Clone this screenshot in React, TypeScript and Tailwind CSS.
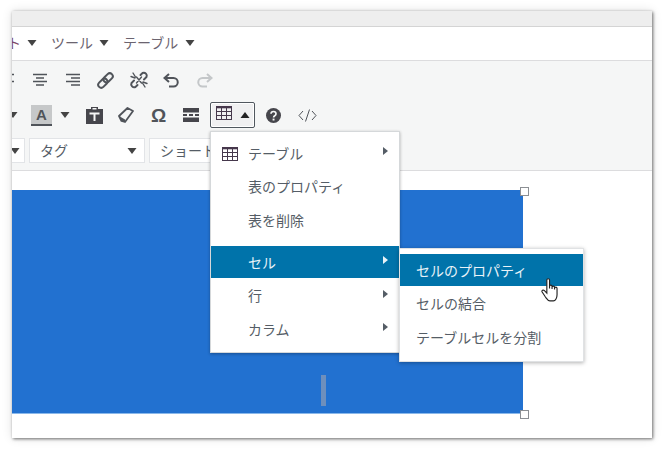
import React from "react";

const font = { fontFamily: '"Noto Sans CJK JP", "Noto Sans", sans-serif' };

function Caret({ up = false, color = "#444" }: { up?: boolean; color?: string }) {
  return (
    <svg width="10" height="6" viewBox="0 0 10 6" className="shrink-0">
      <path d={up ? "M5 0 L9.5 6 L0.5 6 Z" : "M0.5 0 L9.5 0 L5 6 Z"} fill={color} />
    </svg>
  );
}

function TableIcon({ size = 16 }: { size?: number }) {
  return (
    <svg width={size} height={size - 2} viewBox="0 0 16 14" fill="none" stroke="#46384c" strokeWidth="1">
      <rect x="0.5" y="0.5" width="15" height="13" />
      <path d="M0.5 1.5H15.5" strokeWidth="1.6" />
      <path d="M0.5 5.5H15.5M0.5 9.5H15.5M5.5 0.5V13.5M10.5 0.5V13.5" />
    </svg>
  );
}

function Align({ kind }: { kind: "left" | "center" | "right" }) {
  const d =
    kind === "center"
      ? "M1 2.5H15M4 6H12M1 9.5H15M4 13H12"
      : kind === "right"
        ? "M1 2.5H15M6 6H15M1 9.5H15M6 13H15"
        : "M1 2.5H15M1 6H10M1 9.5H15M1 13H10";
  return (
    <svg width="16" height="16" viewBox="0 0 16 16" fill="none" stroke="#50545a" strokeWidth="1.7">
      <path d={d} />
    </svg>
  );
}

function Tool({ children, w = 33 }: { children?: React.ReactNode; w?: number }) {
  return (
    <div className="h-[26px] flex items-center justify-center shrink-0" style={{ width: w }}>
      {children}
    </div>
  );
}

function MenuRow({
  label,
  icon,
  arrow,
  active,
  pad = 37,
}: {
  label: string;
  icon?: React.ReactNode;
  arrow?: boolean;
  active?: boolean;
  pad?: number;
}) {
  return (
    <div
      className={`h-[32px] mb-[1.5px] flex items-center relative text-[14px] ${active ? "bg-[#0073aa] text-[#e8f2f8]" : "text-[#555d66]"}`}
      style={{ paddingLeft: pad }}
    >
      {icon && <span className="absolute left-[11px] top-[10px] flex">{icon}</span>}
      <span className="whitespace-nowrap">{label}</span>
      {arrow && (
        <svg width="5" height="8" viewBox="0 0 5 8" className="absolute right-[11px] top-[10px]">
          <path d="M0 0 L5 4 L0 8 Z" fill={active ? "#e8f2f8" : "#555d66"} />
        </svg>
      )}
    </div>
  );
}

export default function App() {
  return (
    <div className="w-[664px] h-[451px] bg-white overflow-hidden pl-[12px] pt-[11px]" style={font}>
      <div className="relative w-[640px] h-[427px] bg-white flex flex-col shadow-[1px_1px_3px_rgba(0,0,0,0.55),0_0_10px_rgba(0,0,0,0.12)]">
        <div className="h-[16px] bg-[#eeeeee] border-b border-[#d4d4d4] shrink-0" />

        <div className="h-[33px] pb-[2px] flex items-center text-[14px] text-[#6b6470] shrink-0 overflow-hidden whitespace-nowrap">
          <span className="flex items-center gap-[6px] -ml-[5px]">
            <span className="text-[#7c4a68]">ト</span>
            <Caret />
          </span>
          <span className="flex items-center gap-[6px] ml-[14px]">
            ツール
            <Caret />
          </span>
          <span className="flex items-center gap-[7px] ml-[14px]">
            テーブル
            <Caret />
          </span>
        </div>

        <div className="h-[111px] bg-[#f5f6f6] border-y border-[#dcdcde] shrink-0 overflow-hidden">
          <div className="flex items-center -ml-[22px] mt-[6px]">
            <Tool><Align kind="left" /></Tool>
            <Tool><Align kind="center" /></Tool>
            <Tool><Align kind="right" /></Tool>
            <Tool>
              <svg width="19" height="19" viewBox="0 0 19 19" fill="none" stroke="#50545a" strokeWidth="2">
                <g transform="rotate(-45 9.5 9.5)">
                  <rect x="0.5" y="6.5" width="10.5" height="6" rx="3" />
                  <rect x="8" y="6.5" width="10.5" height="6" rx="3" />
                </g>
              </svg>
            </Tool>
            <Tool>
              <svg width="20" height="20" viewBox="0 0 20 20" fill="none" stroke="#50545a" strokeWidth="2" strokeLinecap="round">
                <path d="M11.5 5 L13.5 3 a3 3 0 0 1 4 4 L15 9.5" />
                <path d="M8.5 15 L6.5 17 a3 3 0 0 1 -4 -4 L5 10.5" />
                <path d="M4 3 L6.5 7 M2 6.5 L6 8 M16 17 L13.5 13 M18 13.5 L14 12 M7.5 7 L12.5 13 M7.5 13 L12.5 7" strokeWidth="1.4" />
              </svg>
            </Tool>
            <Tool>
              <svg width="17" height="15" viewBox="0 0 17 15" fill="none" stroke="#50545a" strokeWidth="2">
                <path d="M3 5 H10.5 a4 4 0 0 1 0 8.5 H6" />
                <path d="M6 1 L1.5 5 L6 9" fill="none" />
              </svg>
            </Tool>
            <Tool>
              <svg width="17" height="15" viewBox="0 0 17 15" fill="none" stroke="#c4c7c9" strokeWidth="2">
                <path d="M14 5 H6.5 a4 4 0 0 0 0 8.5 H11" />
                <path d="M11 1 L15.5 5 L11 9" />
              </svg>
            </Tool>
          </div>

          <div className="flex items-center -ml-[12px] mt-[9px]">
            <Tool w={25}><Caret /></Tool>
            <div className="ml-[6px] w-[21px] h-[21px] bg-[#c6c8c9] border-b-2 border-[#50545a] flex items-center justify-center text-[15px] font-semibold text-[#50545a] leading-none" style={{ fontFamily: '"Liberation Sans", sans-serif' }}>
              A
            </div>
            <div className="ml-[8px] w-[10px] flex"><Caret /></div>
            <Tool w={47}>
              <svg width="17" height="18" viewBox="0 0 17 18" className="ml-[2px]">
                <path d="M0 3 H5 V1 H12 V3 H17 V18 H0 Z" fill="#46464c" />
                <rect x="6.5" y="2" width="4" height="1.5" fill="#f5f6f6" />
                <path d="M3.5 6.5 H13.5 V8.5 H9.5 V15 H7.5 V8.5 H3.5 Z" fill="#f5f6f6" />
              </svg>
            </Tool>
            <Tool w={18}>
              <svg width="16" height="16" viewBox="0 0 16 16" strokeLinejoin="round">
                <path d="M1 9 L9.5 1 L15 4 L7 15 L3.5 14 Z" fill="#f5f6f6" stroke="#50545a" strokeWidth="1.8" />
                <path d="M1.5 9.2 L7 12.5 L7 15 L3.5 14 Z" fill="#50545a" />
              </svg>
            </Tool>
            <Tool w={47}>
              <span className="text-[19px] leading-none font-semibold text-[#50545a]" style={{ fontFamily: '"Liberation Sans", sans-serif' }}>Ω</span>
            </Tool>
            <Tool w={18}>
              <svg width="16" height="14" viewBox="0 0 16 14" fill="#46464c">
                <rect x="0" y="0" width="16" height="4.5" />
                <rect x="0" y="6" width="4" height="2" />
                <rect x="6" y="6" width="4" height="2" />
                <rect x="12" y="6" width="4" height="2" />
                <rect x="0" y="9.5" width="16" height="4.5" />
              </svg>
            </Tool>
            <div className="ml-[10px] w-[45px] h-[26px] border border-[#50575e] rounded-[2px] bg-[#f0f0f1] flex items-center pl-[5px] gap-[8px] shadow-[inset_0_0_0_1px_#fff]">
              <span className="-mt-[4px] flex"><TableIcon /></span>
              <Caret up color="#222" />
            </div>
            <Tool w={36}>
              <svg width="15" height="15" viewBox="0 0 15 15">
                <circle cx="7.5" cy="7.5" r="7.5" fill="#46464c" />
                <path d="M5 5.8 a2.5 2.3 0 1 1 3.8 2 c-.9 .5 -1.2 .9 -1.2 1.7" fill="none" stroke="#f5f6f6" strokeWidth="1.7" />
                <rect x="6.6" y="10.6" width="1.9" height="1.9" fill="#f5f6f6" />
              </svg>
            </Tool>
            <Tool w={32}>
              <svg width="19" height="13" viewBox="0 0 19 13" fill="none" stroke="#50545a" strokeWidth="1">
                <path d="M5 2 L1 6.5 L5 11 M14 2 L18 6.5 L14 11 M11.5 0.5 L7.5 12.5" />
              </svg>
            </Tool>
          </div>

          <div className="flex items-center -ml-[20px] mt-[10px] gap-[4px] text-[14px] text-[#555d66]">
            <div className="w-[33px] h-[25px] bg-white border border-[#e2e4e7] flex items-center justify-end pr-[4px] shrink-0">
              <Caret />
            </div>
            <div className="w-[116px] h-[25px] bg-white border border-[#e2e4e7] flex items-center justify-between pl-[10px] pr-[7px] shrink-0">
              タグ
              <Caret />
            </div>
            <div className="w-[120px] h-[25px] bg-white border border-[#e2e4e7] flex items-center pl-[10px] shrink-0 whitespace-nowrap">
              ショートコード
            </div>
          </div>
        </div>

        <div className="flex-1 pt-[19px]">
          <div className="relative w-[511px] h-[224px] bg-[#2271d0] border-b border-[#8ab8ea]">
            <div className="absolute left-[309px] top-[185px] w-[5px] h-[31px] bg-[#6e8fbc]" />
            <div className="absolute -right-[6px] -top-[3px] w-[9px] h-[9px] bg-white border border-[#8c8f94]" />
            <div className="absolute -right-[6px] -bottom-[6px] w-[9px] h-[9px] bg-white border border-[#8c8f94]" />
          </div>
        </div>

        <div className="absolute left-[198px] top-[120px] w-[190px] h-[222px] bg-white border border-[#d5d8da] shadow-[0_1px_3px_rgba(0,0,0,0.3)] pt-[5px]">
          <MenuRow label="テーブル" arrow icon={<TableIcon />} />
          <MenuRow label="表のプロパティ" />
          <MenuRow label="表を削除" />
          <div className="h-[8.5px]" />
          <MenuRow label="セル" arrow active />
          <MenuRow label="行" arrow />
          <MenuRow label="カラム" arrow />
        </div>

        <div className="absolute left-[387px] top-[237px] w-[185px] h-[114px] bg-white border border-[#e0e2e4] shadow-[0_1px_4px_rgba(0,0,0,0.3)] pt-[5px]">
          <MenuRow label="セルのプロパティ" active pad={16} />
          <MenuRow label="セルの結合" pad={16} />
          <MenuRow label="テーブルセルを分割" pad={16} />
        </div>

        <svg width="20" height="25" viewBox="0 0 19 24" className="absolute left-[529px] top-[267px]">
          <path
            d="M5.5 2 a1.3 1.3 0 0 1 2.6 0 V10 V8 a1.2 1.2 0 0 1 2.4 0 V10.5 V9 a1.2 1.2 0 0 1 2.4 0 V11 V10 a1.2 1.2 0 0 1 2.4 0 V16 c0 3 -1.5 6 -3.5 6 H8.5 C6.5 22 5.5 20 4 18 L1 13.5 c-.8 -1.4 1 -2.6 2.2 -1.4 L5.5 14.5 Z"
            fill="#fff"
            stroke="#222"
            strokeWidth="1.1"
          />
        </svg>
      </div>
    </div>
  );
}
